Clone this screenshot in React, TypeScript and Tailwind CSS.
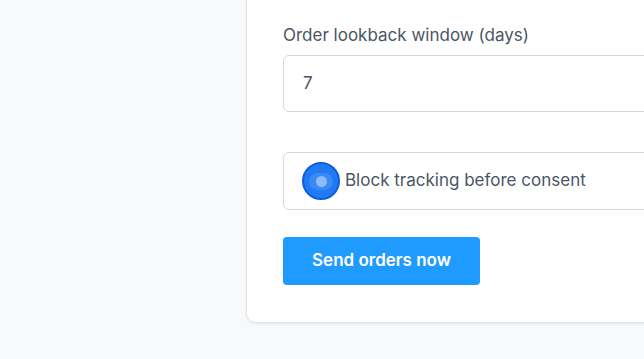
import React from 'react';

const App = () => {
  return (
    <div className="h-[359px] w-[644px] overflow-hidden bg-[#f8f9fb] font-['Inter',sans-serif]">
      <div className="ml-[246px] -mt-[15px] w-[640px] rounded-[10px] border border-[#e2e5ea] bg-white pl-[36px] pt-[37px] pb-[37px] shadow-[0_1px_3px_rgba(0,0,0,0.08)]">
        <label className="mb-[8px] block text-[17px] leading-6 text-[#4b5563]">Order lookback window (days)</label>
        <div className="flex h-[57px] items-center rounded-[6px] border border-[#d5d9df] bg-white pl-[19px] text-[17px] text-[#4b5563]">
          7
        </div>

        <div className="mt-[40px] flex h-[58px] items-center gap-[5px] rounded-[6px] border border-[#d5d9df] bg-white pl-[18px]">
          <div className="flex h-[38px] w-[38px] items-center justify-center rounded-full border-2 border-[#0d5fd8] bg-[#2079f5]">
            <div className="flex h-[17px] w-[24px] items-center justify-center rounded-full bg-[#3a8af5]">
              <div className="h-[11px] w-[11px] rounded-full bg-[#8cbafa]" />
            </div>
          </div>
          <span className="text-[17px] text-[#4b5563]">Block tracking before consent</span>
        </div>

        <button className="mt-[27px] h-[48px] w-[197px] rounded-[4px] bg-[#1f9bff] text-[17px] font-semibold text-white">
          Send orders now
        </button>
      </div>
    </div>
  );
};

export default App;
